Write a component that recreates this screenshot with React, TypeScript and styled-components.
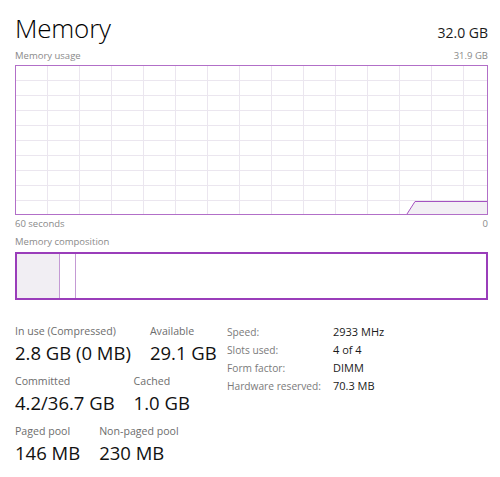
import styled, { createGlobalStyle } from 'styled-components';

const GlobalStyle = createGlobalStyle`
    html, body {
        margin: 0;
        padding: 0;
        background: #ffffff;
    }
    body {
        font-family: 'Open Sans', 'Noto Sans', sans-serif;
        color: #1a1a1a;
    }
`

const Page = styled.div`
    width: 500px;
    height: 477px;
    box-sizing: border-box;
    padding: 9px 12px 0 15px;
    display: flex;
    flex-direction: column;
    overflow: hidden;
`

const Header = styled.div`
    display: flex;
    justify-content: space-between;
    align-items: baseline;
    height: 37px;
`

const Title = styled.h1`
    margin: 0;
    font-size: 26px;
    font-weight: 300;
    line-height: 38px;
    letter-spacing: -0.2px;
    color: #000;
`

const Total = styled.span`
    font-size: 14px;
    color: #1a1a1a;
`

const CaptionRow = styled.div<{ top: number }>`
    display: flex;
    justify-content: space-between;
    font-size: 9.5px;
    line-height: 12px;
    color: #8a8a8a;
    margin-top: ${(p) => p.top}px;
`

const Graph = styled.div`
    position: relative;
    height: 150px;
    border: 1px solid #b26fc8;
    box-sizing: border-box;
    margin-top: 3px;
    overflow: hidden;
`

const GraphSvg = styled.svg`
    position: absolute;
    inset: 0;
    width: 100%;
    height: 100%;
`

const CompositionBar = styled.div`
    height: 48px;
    box-sizing: border-box;
    border: 2px solid #9a3dba;
    margin-top: 4px;
    display: flex;
`

const Segment = styled.div<{ w: number; fill: string; last?: boolean }>`
    width: ${(p) => p.w}px;
    background: ${(p) => p.fill};
    border-right: ${(p) => (p.last ? 'none' : '1px solid #c49ad4')};
    ${(p) => (p.last ? 'flex: 1;' : '')}
`

const Stats = styled.div`
    display: flex;
    margin-top: 23px;
`

const LeftStats = styled.div`
    width: 212px;
    display: flex;
    flex-direction: column;
    gap: 6px;
`

const StatRow = styled.div`
    display: flex;
    gap: 19px;
`

const Stat = styled.div`
    display: flex;
    flex-direction: column;
`

const StatLabel = styled.span`
    font-size: 10.6px;
    line-height: 16px;
    color: #6d6d6d;
    white-space: nowrap;
`

const StatValue = styled.span`
    font-size: 18.5px;
    line-height: 28px;
    color: #111;
    white-space: nowrap;
`

const InfoTable = styled.div`
    display: grid;
    grid-template-columns: 106px auto;
    grid-auto-rows: 18px;
    align-content: start;
`

const InfoLabel = styled.span`
    font-size: 10.2px;
    line-height: 18px;
    color: #7a7a7a;
    white-space: nowrap;
`

const InfoValue = styled.span`
    font-size: 11px;
    line-height: 18px;
    color: #1a1a1a;
    white-space: nowrap;
`

const UsageGraph = () => {
    const w = 471;
    const h = 148;
    const vLines = [];
    for (let x = 31; x < w; x += 32) vLines.push(x);
    const hLines = [];
    for (let y = 14; y < h; y += 15) hLines.push(y);
    return (
        <Graph>
            <GraphSvg viewBox={`0 0 ${w} ${h}`} preserveAspectRatio="none">
                {vLines.map((x) => (
                    <line key={'v' + x} x1={x + 0.5} y1={0} x2={x + 0.5} y2={h} stroke="#ebe6ef" strokeWidth={1} />
                ))}
                {hLines.map((y) => (
                    <line key={'h' + y} x1={0} y1={y + 0.5} x2={w} y2={y + 0.5} stroke="#ebe6ef" strokeWidth={1} />
                ))}
                <polygon points={`391,${h} 399,135.5 ${w},135.5 ${w},${h}`} fill="#f2eff4" />
                <polyline points={`391,${h} 399,135.5 ${w},135.5`} fill="none" stroke="#a452c0" strokeWidth={1} />
            </GraphSvg>
        </Graph>
    );
};

const leftStats = [
    [
        { label: 'In use (Compressed)', value: '2.8 GB (0 MB)' },
        { label: 'Available', value: '29.1 GB' },
    ],
    [
        { label: 'Committed', value: '4.2/36.7 GB' },
        { label: 'Cached', value: '1.0 GB' },
    ],
    [
        { label: 'Paged pool', value: '146 MB' },
        { label: 'Non-paged pool', value: '230 MB' },
    ],
];

const info = [
    ['Speed:', '2933 MHz'],
    ['Slots used:', '4 of 4'],
    ['Form factor:', 'DIMM'],
    ['Hardware reserved:', '70.3 MB'],
];

export default function App() {
    return (
        <>
            <GlobalStyle />
            <Page>
                <Header>
                    <Title>Memory</Title>
                    <Total>32.0 GB</Total>
                </Header>
                <CaptionRow top={4}>
                    <span>Memory usage</span>
                    <span>31.9 GB</span>
                </CaptionRow>
                <UsageGraph />
                <CaptionRow top={3}>
                    <span>60 seconds</span>
                    <span>0</span>
                </CaptionRow>
                <CaptionRow top={6}>
                    <span>Memory composition</span>
                </CaptionRow>
                <CompositionBar>
                    <Segment w={42} fill="#f1eef3" />
                    <Segment w={15} fill="#ffffff" />
                    <Segment w={0} fill="#ffffff" last />
                </CompositionBar>
                <Stats>
                    <LeftStats>
                        {leftStats.map((row, i) => (
                            <StatRow key={i}>
                                {row.map((s) => (
                                    <Stat key={s.label}>
                                        <StatLabel>{s.label}</StatLabel>
                                        <StatValue>{s.value}</StatValue>
                                    </Stat>
                                ))}
                            </StatRow>
                        ))}
                    </LeftStats>
                    <InfoTable>
                        {info.map(([l, v]) => (
                            <>
                                <InfoLabel key={l}>{l}</InfoLabel>
                                <InfoValue key={l + 'v'}>{v}</InfoValue>
                            </>
                        ))}
                    </InfoTable>
                </Stats>
            </Page>
        </>
    );
}
